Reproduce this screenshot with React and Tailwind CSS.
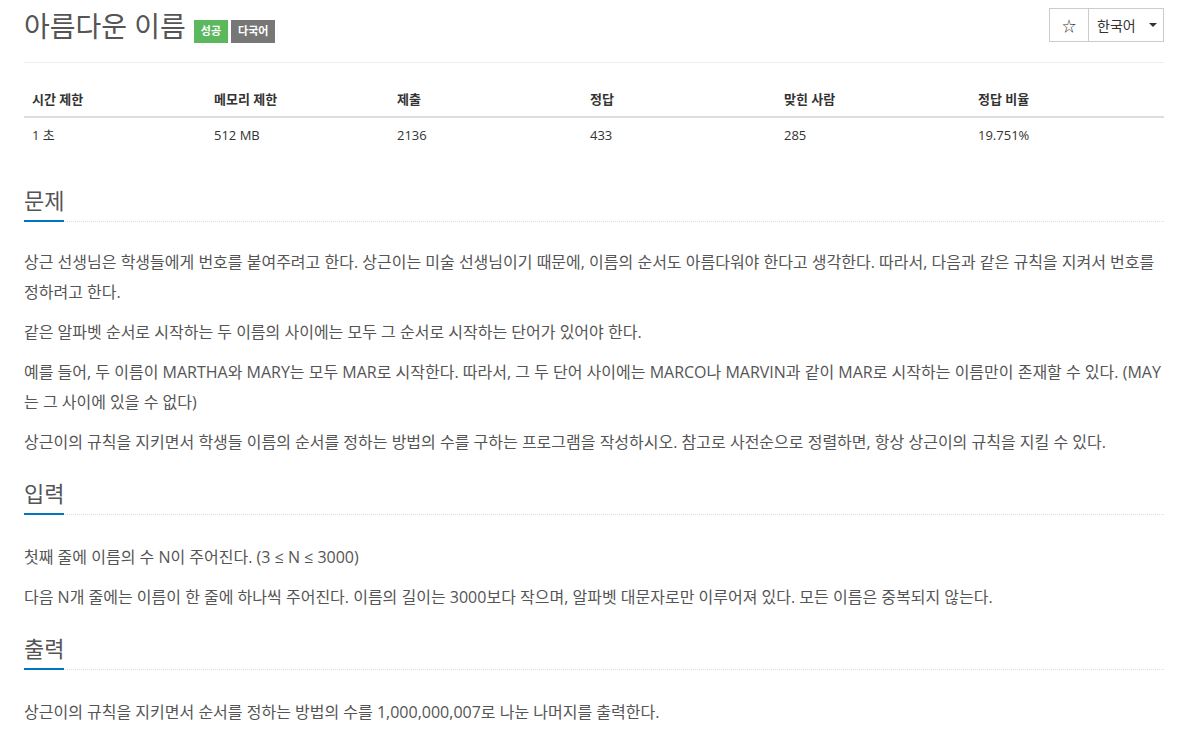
import { useState } from 'react';

const FONT = '"Open Sans", "Noto Sans CJK KR", sans-serif';

const stats = [
  { label: '시간 제한', value: '1 초', w: 'w-[182px]' },
  { label: '메모리 제한', value: '512 MB', w: 'w-[183px]' },
  { label: '제출', value: '2136', w: 'w-[193px]' },
  { label: '정답', value: '433', w: 'w-[194px]' },
  { label: '맞힌 사람', value: '285', w: 'w-[194px]' },
  { label: '정답 비율', value: '19.751%', w: 'w-[194px]' },
];

function SectionTitle({ children, className = '' }) {
  return (
    <div className={`flex border-b border-dotted border-[#ddd] ${className}`}>
      <h2 className="-mb-px border-b-2 border-[#0076c0] pb-[8px] text-[22px] leading-[24px] font-normal text-[#555]">
        {children}
      </h2>
    </div>
  );
}

function Para({ children }) {
  return <p className="mb-[10px] text-[16px] leading-[30px] text-[#555]">{children}</p>;
}

export default function App() {
  const [starred, setStarred] = useState(false);

  return (
    <div className="min-h-screen bg-white pl-[24px] pr-[14px]" style={{ fontFamily: FONT }}>
      {/* 제목 */}
      <div className="flex h-[63px] items-start justify-between border-b border-[#eee] pt-[8px]">
        <div className="flex items-start">
          <h1 className="text-[28px] leading-[36px] font-normal text-[#555]">아름다운 이름</h1>
          <span className="ml-[8px] mt-[12px] flex h-[23px] items-center bg-[#5cb85c] px-[7px] text-[11px] font-bold text-white">
            성공
          </span>
          <span className="ml-[3px] mt-[12px] flex h-[23px] items-center bg-[#777] px-[7px] text-[11px] font-bold text-white">
            다국어
          </span>
        </div>
        <div className="flex h-[34px] text-[14px] text-[#333]">
          <button
            onClick={() => setStarred(!starred)}
            className="flex w-[40px] items-center justify-center border border-[#ccc] bg-white"
          >
            {starred ? '★' : '☆'}
          </button>
          <button className="-ml-px flex w-[76px] items-center border border-[#ccc] bg-white pl-[8px]">
            한국어
            <span className="ml-[13px] h-0 w-0 border-x-[4px] border-t-[4px] border-x-transparent border-t-[#333]" />
          </button>
        </div>
      </div>

      {/* 통계 */}
      <table className="mt-[19px] w-full table-fixed border-collapse text-[13px] text-[#333]">
        <thead>
          <tr className="border-b-2 border-[#ddd]">
            {stats.map((s) => (
              <th key={s.label} className={`${s.w} px-[8px] py-[8px] text-left font-bold leading-[18px]`}>
                {s.label}
              </th>
            ))}
          </tr>
        </thead>
        <tbody>
          <tr>
            {stats.map((s) => (
              <td key={s.label} className="px-[8px] py-[8px] leading-[18px]">
                {s.value}
              </td>
            ))}
          </tr>
        </tbody>
      </table>

      {/* 문제 */}
      <SectionTitle className="mt-[36px]">문제</SectionTitle>
      <div className="mt-[25px]">
        <Para>
          상근 선생님은 학생들에게 번호를 붙여주려고 한다. 상근이는 미술 선생님이기 때문에, 이름의 순서도 아름다워야 한다고 생각한다. 따라서, 다음과 같은 규칙을 지켜서 번호를 정하려고 한다.
        </Para>
        <Para>같은 알파벳 순서로 시작하는 두 이름의 사이에는 모두 그 순서로 시작하는 단어가 있어야 한다.</Para>
        <Para>
          예를 들어, 두 이름이 MARTHA와 MARY는 모두 MAR로 시작한다. 따라서, 그 두 단어 사이에는 MARCO나 MARVIN과 같이 MAR로 시작하는 이름만이 존재할 수 있다. (MAY는 그 사이에 있을 수 없다)
        </Para>
        <Para>
          상근이의 규칙을 지키면서 학생들 이름의 순서를 정하는 방법의 수를 구하는 프로그램을 작성하시오. 참고로 사전순으로 정렬하면, 항상 상근이의 규칙을 지킬 수 있다.
        </Para>
      </div>

      {/* 입력 */}
      <SectionTitle className="mt-[24px]">입력</SectionTitle>
      <div className="mt-[27px]">
        <Para>첫째 줄에 이름의 수 N이 주어진다. (3 ≤ N ≤ 3000)</Para>
        <Para>
          다음 N개 줄에는 이름이 한 줄에 하나씩 주어진다. 이름의 길이는 3000보다 작으며, 알파벳 대문자로만 이루어져 있다. 모든 이름은 중복되지 않는다.
        </Para>
      </div>

      {/* 출력 */}
      <SectionTitle className="mt-[24px]">출력</SectionTitle>
      <div className="mt-[27px]">
        <Para>상근이의 규칙을 지키면서 순서를 정하는 방법의 수를 1,000,000,007로 나눈 나머지를 출력한다.</Para>
      </div>
    </div>
  );
}
